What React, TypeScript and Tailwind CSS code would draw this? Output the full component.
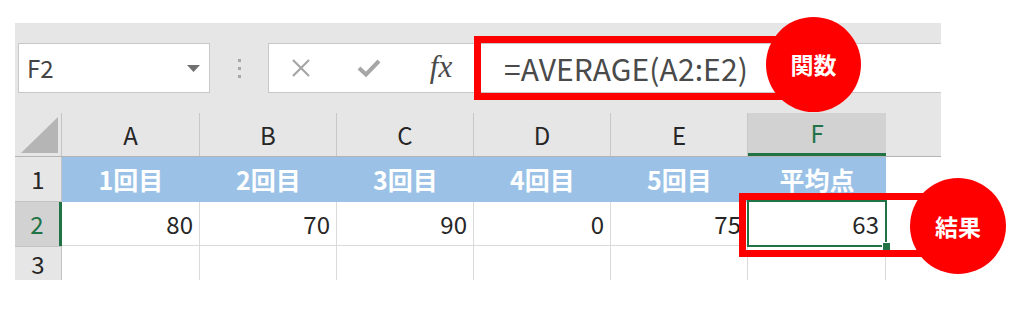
import React from "react";

const cols = [
  { key: "A", w: "w-[138px]", title: "1回目", val: "80" },
  { key: "B", w: "w-[137px]", title: "2回目", val: "70" },
  { key: "C", w: "w-[137px]", title: "3回目", val: "90" },
  { key: "D", w: "w-[137px]", title: "4回目", val: "0" },
  { key: "E", w: "w-[137px]", title: "5回目", val: "75" },
  { key: "F", w: "w-[138px]", title: "平均点", val: "63" },
];

export default function App() {
  return (
    <div className="relative w-[1024px] h-[319px] bg-white overflow-hidden font-['Noto_Sans_CJK_JP',sans-serif] text-[#262626]">
      <div className="ml-[15px] mt-[23px] w-[926px]">
        {/* ── FORMULA BAR ── */}
        <div className="h-[90px] bg-[#e6e6e6] flex items-start pt-[20px] pl-[3px]">
          <div className="w-[192px] h-[50px] bg-white border border-[#c8c8c8] flex items-center justify-between pl-[8px] pr-[9px]">
            <span className="text-[24px] leading-none text-[#444]">F2</span>
            <svg width="13" height="7" viewBox="0 0 13 7">
              <path d="M0 0 L13 0 L6.5 7 Z" fill="#707070" />
            </svg>
          </div>
          <div className="w-[58px] h-[50px] flex flex-col items-center justify-center gap-[5px]">
            <span className="w-[3px] h-[3px] bg-[#a8a8a8]" />
            <span className="w-[3px] h-[3px] bg-[#a8a8a8]" />
            <span className="w-[3px] h-[3px] bg-[#a8a8a8]" />
          </div>
          <div className="w-[210px] h-[50px] bg-white border border-[#c8c8c8] flex items-center">
            <div className="w-[64px] flex justify-center">
              <svg width="20" height="20" viewBox="0 0 20 20">
                <path d="M2 2 L18 18 M18 2 L2 18" stroke="#a6a6a6" strokeWidth="2.2" />
              </svg>
            </div>
            <div className="w-[72px] flex justify-center">
              <svg width="24" height="18" viewBox="0 0 24 18">
                <path d="M2 9 L9 15.5 L22 2" stroke="#a6a6a6" strokeWidth="4" fill="none" />
              </svg>
            </div>
            <div className="w-[72px] flex justify-center">
              <span className="font-['Liberation_Serif',serif] italic text-[31px] leading-none text-[#4a4a4a] -mt-[4px]">fx</span>
            </div>
          </div>
          <div className="flex-1 h-[50px] bg-white border-y border-[#c8c8c8] flex items-center pl-[26px]">
            <span className="text-[30px] leading-none text-[#4a4a4a] tracking-[0.1px]">=AVERAGE(A2:E2)</span>
          </div>
        </div>

        {/* ── COLUMN HEADERS ── */}
        <div className="h-[44px] bg-[#e6e6e6] flex border-b border-[#b4b4b4]">
          <div className="w-[47px] h-full border-r border-[#c4c4c4] flex items-end justify-end pr-[3px] pb-[3px]">
            <svg width="37" height="36" viewBox="0 0 37 36">
              <path d="M37 0 L37 36 L0 36 Z" fill="#b5b5b5" />
            </svg>
          </div>
          {cols.map((c) =>
            c.key === "F" ? (
              <div key={c.key} className={`${c.w} h-full bg-[#d2d2d2] border-b-[3px] border-[#217346] flex items-center justify-center text-[24px] text-[#217346]`}>
                {c.key}
              </div>
            ) : (
              <div key={c.key} className={`${c.w} h-full border-r border-[#c8c8c8] flex items-center justify-center text-[24px]`}>
                {c.key}
              </div>
            )
          )}
        </div>

        {/* ── ROW 1 ── */}
        <div className="h-[45px] flex">
          <div className="w-[47px] h-full bg-[#e6e6e6] border-r border-b border-[#c4c4c4] flex items-center justify-center text-[24px]">1</div>
          {cols.map((c) => (
            <div key={c.key} className={`${c.w} h-full bg-[#9bc2e6] flex items-center justify-center text-[25px] font-bold text-white`}>
              {c.title}
            </div>
          ))}
        </div>

        {/* ── ROW 2 ── */}
        <div className="h-[44px] flex">
          <div className="w-[47px] h-full bg-[#d2d2d2] border-r-[3px] border-[#217346] flex items-center justify-center text-[24px] text-[#217346]">2</div>
          {cols.map((c) => (
            <div key={c.key} className={`${c.w} h-full border-r border-b border-[#dadada] flex items-center justify-end pr-[6px] text-[24px]`}>
              {c.val}
            </div>
          ))}
        </div>

        {/* ── ROW 3 ── */}
        <div className="h-[34px] flex">
          <div className="w-[47px] h-full bg-[#e6e6e6] border-r border-t border-[#c4c4c4] flex items-start justify-center text-[24px] leading-[34px]">3</div>
          {cols.map((c) => (
            <div key={c.key} className={`${c.w} h-full border-r border-[#dadada]`} />
          ))}
        </div>
      </div>

      {/* ── SELECTION ── */}
      <div className="absolute left-[747px] top-[200px] w-[140px] h-[47px] border-2 border-[#217346]" />
      <div className="absolute left-[882px] top-[242px] w-[9px] h-[9px] bg-[#217346] border border-white" />

      {/* ── CALLOUTS ── */}
      <div className="absolute left-[474px] top-[36px] w-[320px] h-[64px] border-[7px] border-[#ff0000]" />
      <div className="absolute left-[766px] top-[17px] w-[95px] h-[95px] rounded-full bg-[#ff0000] flex items-center justify-center text-white font-bold text-[23px]">
        関数
      </div>
      <div className="absolute left-[739px] top-[193px] w-[190px] h-[64px] border-[7px] border-[#ff0000]" />
      <div className="absolute left-[910px] top-[178px] w-[96px] h-[96px] rounded-full bg-[#ff0000] flex items-center justify-center text-white font-bold text-[23px]">
        結果
      </div>
    </div>
  );
}
